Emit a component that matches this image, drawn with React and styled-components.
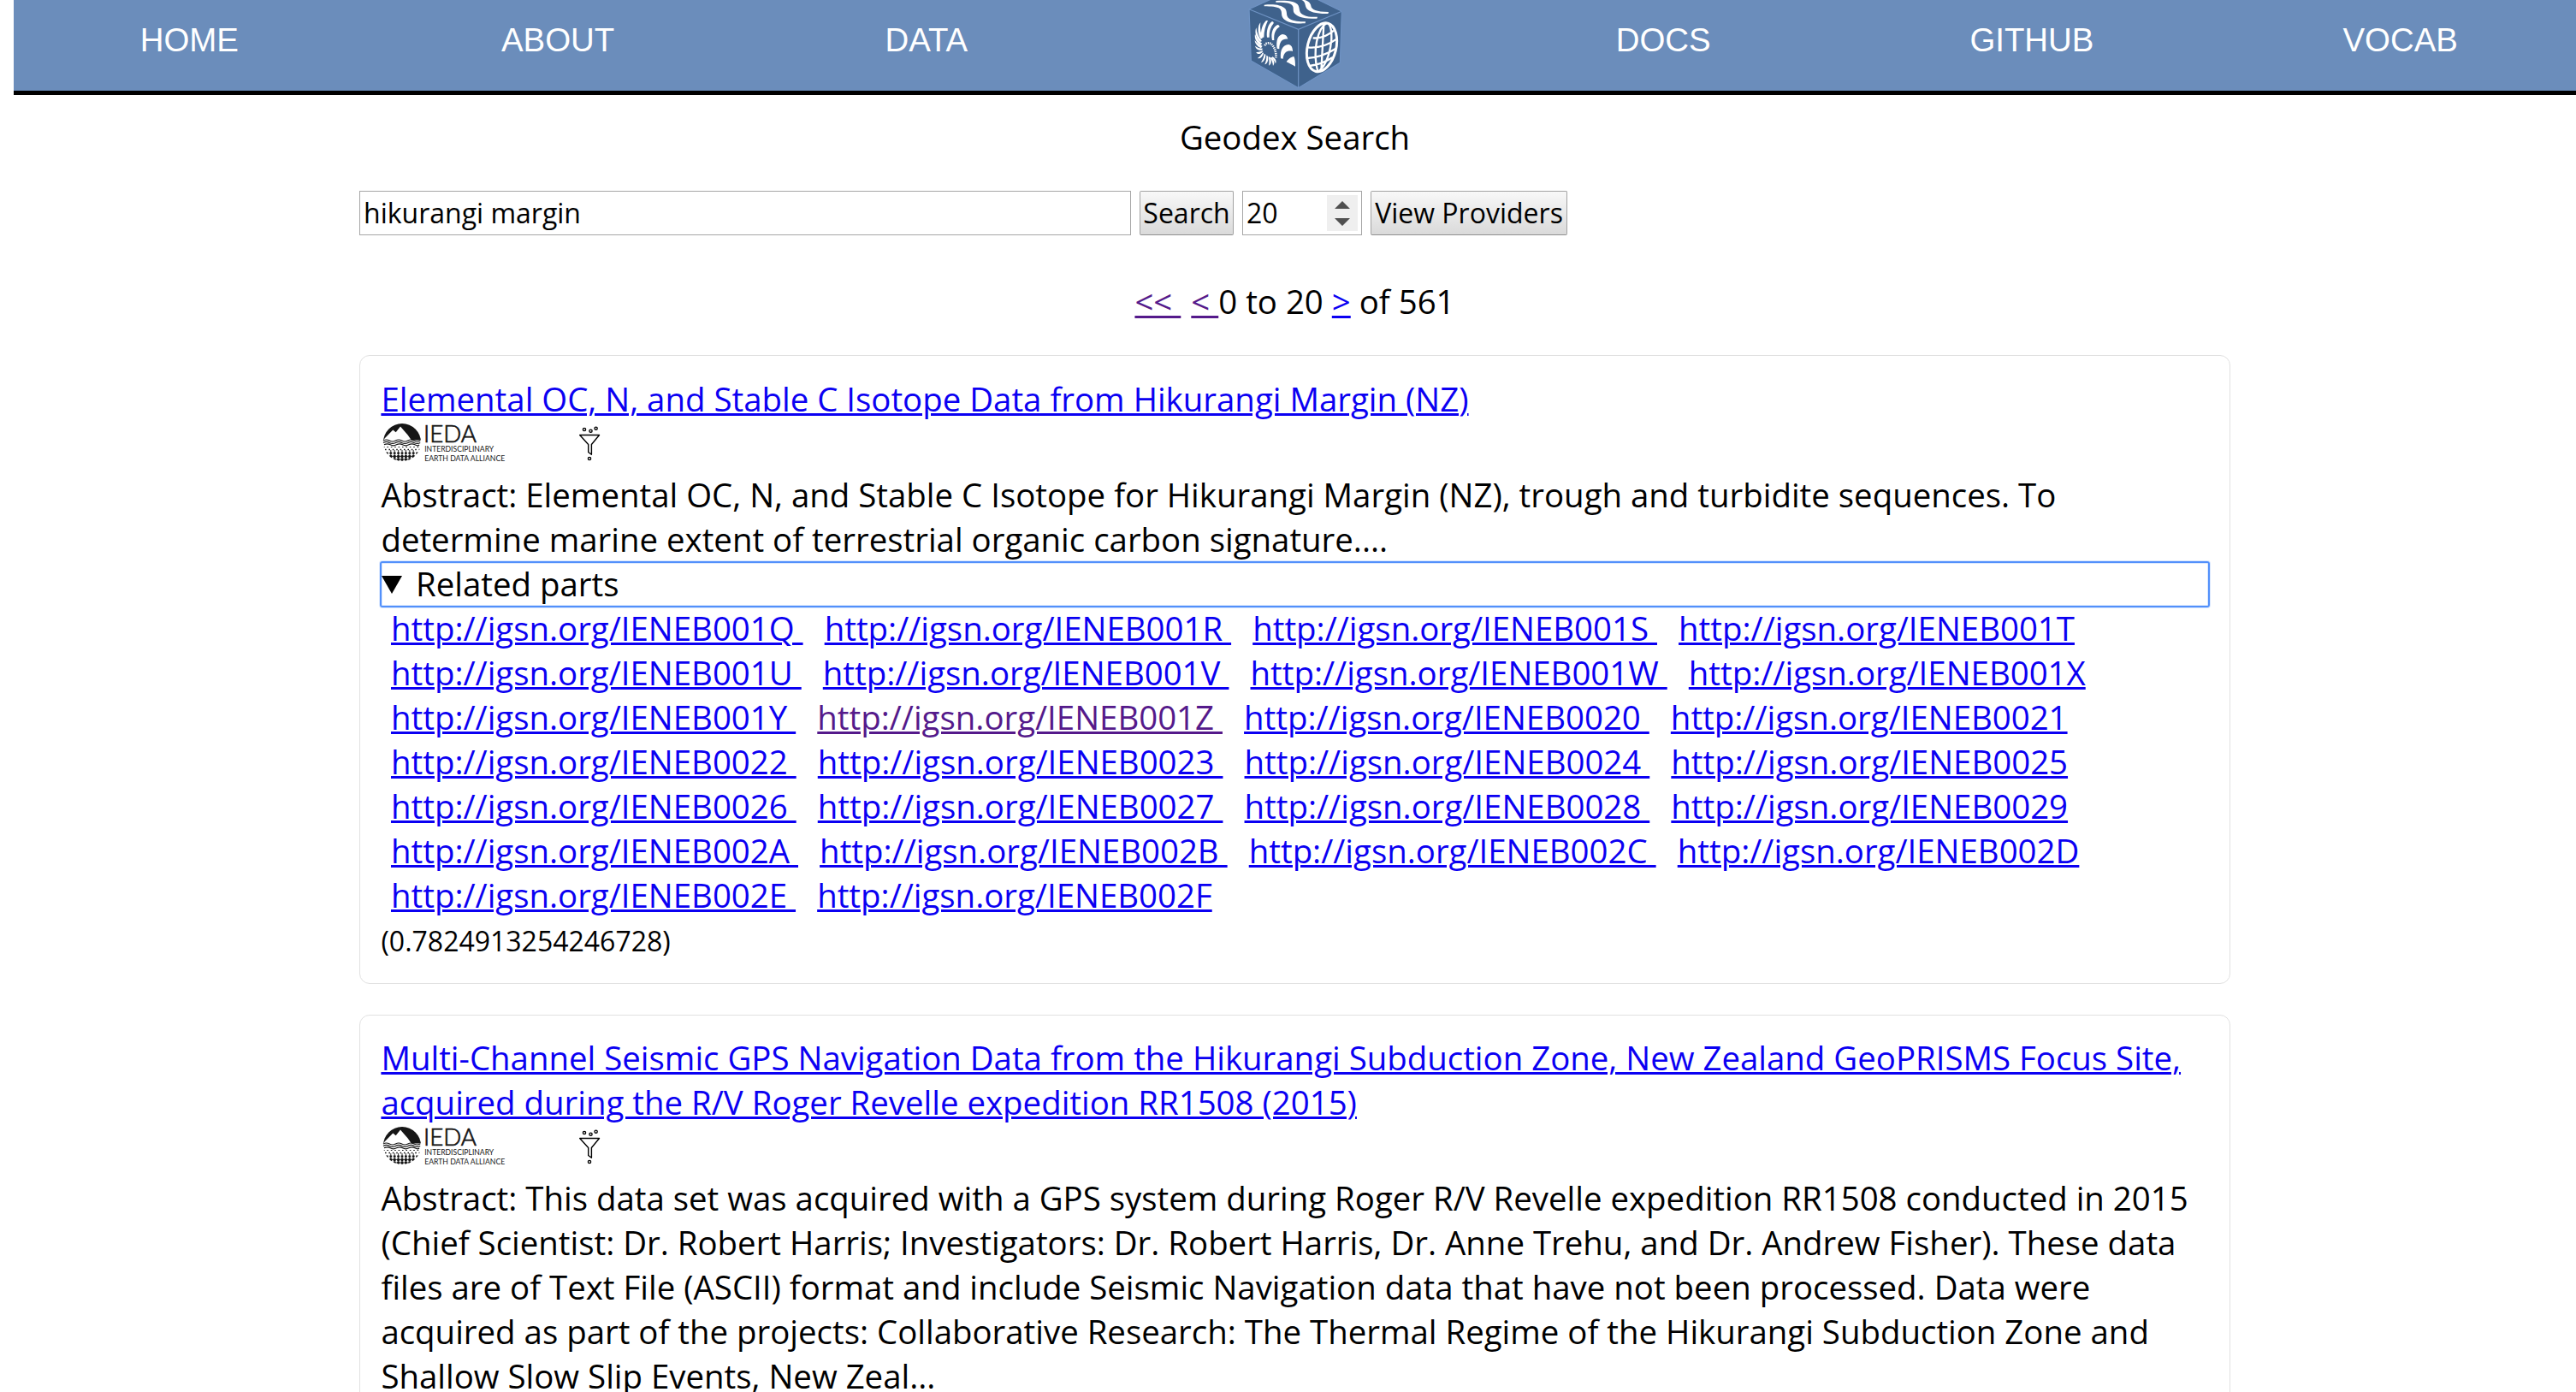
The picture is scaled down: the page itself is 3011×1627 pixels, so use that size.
import React from 'react';
import styled, { createGlobalStyle } from 'styled-components';

const GlobalStyle = createGlobalStyle`
  html, body { margin: 0; background: #fff; overflow: hidden; height: 1627px; }
  * { box-sizing: border-box; }
`;

const Page = styled.div`
  height: 1627px;
  overflow: hidden;
  padding-left: 16px;
  font-family: 'Open Sans', 'Noto Sans', sans-serif;
  font-size: 38.4px;
  line-height: 52px;
  color: #000;
`;

const Header = styled.header`
  display: grid;
  grid-template-columns: repeat(7, 1fr);
  column-gap: 20px;
  height: 111px;
  background: #6b8dbb;
  border-bottom: 5px solid #000;
`;

const NavLink = styled.a`
  display: flex;
  justify-content: center;
  padding-top: 25px;
  line-height: 44px;
  font-family: 'Liberation Sans', Arial, sans-serif;
  color: #fff;
  text-decoration: none;
`;

const LogoCell = styled.div`
  display: flex;
  justify-content: center;
  height: 106px;
  padding-left: 3px;
  overflow: hidden;
`;

const Main = styled.main`
  display: flex;
  flex-direction: column;
  width: 2187px;
  margin-left: 404px;
`;

const Heading = styled.div`
  margin-top: 23px;
  text-align: center;
`;

const SearchBar = styled.form`
  display: flex;
  gap: 10px;
  height: 52px;
  margin-top: 37px;
  font-size: 32px;
`;

const TextField = styled.input`
  width: ${(p) => p.$width};
  height: 100%;
  padding: 0 4px 1px;
  border: ${(p) => (p.$bare ? '0' : '1px solid #a6a6a6')};
  outline: 0;
  font: inherit;
  color: #000;
  background: #fff;
`;

const NumberBox = styled.div`
  display: flex;
  align-items: center;
  justify-content: space-between;
  width: 140px;
  padding-right: 4px;
  border: 1px solid #a6a6a6;
`;

const Spinner = styled.div`
  display: flex;
  width: 36px;
  height: 42px;
  background: #efefef;
`;

const Button = styled.button`
  width: ${(p) => p.$width};
  padding: 0 0 1px;
  border: 1px solid #a3a3a3;
  border-bottom-color: #8f8f8f;
  border-radius: 2px;
  background: linear-gradient(#f8f8f8, #dadada);
  font: inherit;
  line-height: 48px;
  color: #000;
  white-space: nowrap;
`;

const Link = styled.a`
  color: ${(p) => (p.$visited ? '#551a8b' : '#0b00f2')};
  text-decoration: underline;
  text-decoration-thickness: 3px;
  white-space: ${(p) => (p.$pre ? 'pre' : 'normal')};
`;

const Pager = styled.div`
  display: flex;
  justify-content: center;
  margin: 51px 0 37px;
  white-space: pre;
`;

const PagerGap = styled.span`
  width: 12px;
`;

const Card = styled.section`
  margin-bottom: 36px;
  padding: ${(p) => p.$top}px 25px 24px 24.4px;
  border: 1px solid #e1e1e1;
  border-radius: 12px;
`;

const LogoRow = styled.div`
  display: flex;
  height: 60px;
  padding-left: 0.6px;
`;

const FunnelBox = styled.div`
  margin-left: 60px;
`;

const Summary = styled.div`
  display: flex;
  align-items: center;
  height: 54px;
  margin: 0 -2px -2px -1.4px;
  padding-bottom: 2px;
  gap: 16px;
  border: 2px solid #5290fb;
  border-radius: 3px;
  box-shadow: 0 0 0 1px rgba(82, 144, 251, 0.2), inset 0 0 0 1px rgba(82, 144, 251, 0.2);
`;

const Marker = styled.svg`
  margin-top: 3px;
`;

const PartsRow = styled.div`
  display: flex;
  gap: 25.1px;
  padding-left: 11.6px;
`;

const Score = styled.div`
  height: 53px;
  padding-top: 2px;
  font-size: 32px;
`;

function CubeLogo() {
  return (
    <svg width="170" height="106" viewBox="0 0 510 318">
      <path d="M90 32 L252 -40 L415 40 L409 220 L263 308 L97 213 Z" fill="#3f628c" />
      <path d="M90 32 L263 103 L415 40 M263 103 V308 M90 32 L97 213 L263 308 L409 220 L415 40 M90 32 L170 -4 M415 40 L326 -4" fill="none" stroke="#6f93c4" strokeWidth="3.5" />
      <g fill="#fff">
        <path d="M143 17 C175 14 203 16 217 31 C226 44 217 56 232 66 C246 75 266 76 288 76 L287 82 C252 84 225 80 211 66 C199 53 209 42 198 31 C187 23 168 23 143 22 Z" />
        <path d="M184 3 C220 1 247 3 260 15 C270 27 262 42 278 51 C292 59 310 60 330 59 L328 65 C293 67 264 63 251 49 C240 37 250 26 240 17 C230 8 209 9 184 8 Z" />
        <path d="M276 -2 C298 2 305 10 307 20 C309 34 325 41 369 42 L367 48 C327 49 301 42 292 30 C285 19 289 5 274 0 Z" />
        <path d="M252 233 C243 228 231 222 221 217 C227 207 238 199 247 198 C251 205 252 218 252 233 Z" />
        <path d="M201 205 C198 178 207 157 228 156 C238 158 243 165 243 180 C226 176 212 181 209 206 Z" />
        <path d="M188 170 C184 143 190 124 207 120 C218 121 223 126 226 137 C207 135 196 146 196 172 Z" />
        <path d="M171 141 C165 115 175 93 190 87 C195 88 197 91 197 94 C183 103 176 117 178 141 Z" />
        <path d="M153 131 C150 108 157 83 171 75 C176 77 177 79 176 82 C165 96 160 111 161 131 Z" />
        <path d="M133 131 C129 109 137 84 150 72 L156 72 C148 89 142 108 142 131 Z" />
        <path d="M131 137 C119 118 119 91 130 79 C127 99 131 118 138 133 Z" />
        <path d="M129 147 C113 133 109 112 115 97 C117 116 124 131 135 144 Z" />
        <path d="M130 159 C114 149 108 132 111 119 C117 135 126 145 136 153 Z" />
        <path d="M132 169 C119 164 110 151 110 141 C119 153 127 158 137 161 Z" />
        <path d="M135 176 C124 178 113 171 111 161 C121 168 129 170 138 170 Z" />
        <path d="M137 182 C130 191 118 192 115 183 C124 184 132 180 139 177 Z" />
        <path d="M141 187 C137 201 127 208 120 204 C130 198 134 190 138 184 Z" />
        <path d="M148 191 C148 207 140 218 132 219 C139 208 142 199 143 189 Z" />
        <path d="M156 197 C159 212 154 223 145 226 C150 214 151 205 151 194 Z" />
        <path d="M164 201 C170 214 168 226 159 230 C162 218 160 208 158 198 Z" />
        <path d="M169 201 C179 211 181 222 174 231 C173 218 169 210 164 203 Z" />
        <path d="M172 199 C184 205 187 215 183 223 C180 214 175 208 169 203 Z" />
      </g>
      <path d="M146 160 C147 150 160 148 168 155 C179 164 186 184 184 203" fill="none" stroke="#fff" strokeWidth="8" strokeDasharray="4 3" />
      <g fill="none" stroke="#fff" strokeWidth="7">
        <ellipse cx="345" cy="166" rx="50" ry="87" transform="rotate(14 345 166)" strokeWidth="9" />
        <path d="M363 80 C330 98 311 180 331 251 M367 80 C394 110 374 220 332 252 M352 84 L343 250 M314 133 C340 136 365 126 387 107 M297 166 C338 170 370 156 398 136 M293 204 C335 203 367 188 397 169 M302 231 C330 228 360 216 382 202" />
      </g>
    </svg>
  );
}

function IedaLogo() {
  return (
    <svg width="162" height="56" viewBox="0 0 162 56">
      <defs>
        <clipPath id="disc"><circle cx="24" cy="25" r="22" /></clipPath>
      </defs>
      <g clipPath="url(#disc)">
        <rect x="0" y="2" width="48" height="20.5" fill="#161616" />
        <path d="M0 25 L4 20 L13.3 10.5 L16.7 13.3 L22 6.5 L30.7 16.5 L35 22.7 L35 25 Z" fill="#fff" />
        <g stroke="#161616" strokeDasharray="1.6 2.8">
          <path d="M2 30.5 H46" strokeWidth="1" />
          <path d="M4 33.5 H46" strokeWidth="1.4" />
        </g>
        <g stroke="#161616" strokeDasharray="2.8 1.6">
          <path d="M5 37.6 H46" strokeWidth="2.4" />
          <path d="M5 41.4 H46" strokeWidth="3" />
          <path d="M5 45 H46" strokeWidth="3.2" />
        </g>
        <g stroke="#161616" strokeWidth="0.9">
          <path d="M10.8 34 V47 M15.2 34 V47 M19.6 34 V47 M24 34 V47 M28.4 34 V47 M32.8 34 V47 M37.2 34 V47" />
          <path d="M8 41.4 H40 M12 45 H36" />
        </g>
      </g>
      <g fill="none" stroke="#161616" strokeWidth="1.2">
        <path d="M2 23 q3.6 -2 7.2 0 t7.2 0 t7.2 0 t7.2 0 t7.2 0 t7.2 0" />
        <path d="M2 25.4 q3.6 -2 7.2 0 t7.2 0 t7.2 0 t7.2 0 t7.2 0 t7.2 0" />
        <path d="M3 27.8 q3.6 -2 7.2 0 t7.2 0 t7.2 0 t7.2 0 t7.2 0 t5 0" />
      </g>
      <g fill="#161616" fontFamily="Lato, sans-serif">
        <text x="49" y="25.3" fontSize="26.5" fontWeight="300" stroke="#161616" strokeWidth="0.7" textLength="62" lengthAdjust="spacingAndGlyphs">IEDA</text>
        <text x="50.2" y="36.3" fontSize="8.6" textLength="81" lengthAdjust="spacingAndGlyphs">INTERDISCIPLINARY</text>
        <text x="50.2" y="47" fontSize="8.6" textLength="94" lengthAdjust="spacingAndGlyphs">EARTH DATA ALLIANCE</text>
      </g>
    </svg>
  );
}

function FunnelIcon() {
  return (
    <svg width="44" height="56" viewBox="0 0 44 56" fill="none" stroke="#000" strokeWidth="1.4">
      <circle cx="15" cy="10" r="1.6" />
      <circle cx="22.5" cy="11.7" r="1.6" />
      <circle cx="28.6" cy="8.7" r="1.6" />
      <circle cx="21" cy="44" r="1.6" />
      <path d="M9.7 16.5 H32.5 L23.4 27.5 V39.3 L19.7 36.5 V27.5 Z" strokeLinejoin="round" />
    </svg>
  );
}

function ResultLogos() {
  return (
    <LogoRow>
      <IedaLogo />
      <FunnelBox><FunnelIcon /></FunnelBox>
    </LogoRow>
  );
}

const partRows = [
  ['001Q', '001R', '001S', '001T'],
  ['001U', '001V', '001W', '001X'],
  ['001Y', '001Z', '0020', '0021'],
  ['0022', '0023', '0024', '0025'],
  ['0026', '0027', '0028', '0029'],
  ['002A', '002B', '002C', '002D'],
  ['002E', '002F'],
];

const lines = (items) => items.map((t) => <div key={t}>{t}</div>);

export default function App() {
  return (
    <Page>
      <GlobalStyle />
      <Header>
        <NavLink>HOME</NavLink>
        <NavLink>ABOUT</NavLink>
        <NavLink>DATA</NavLink>
        <LogoCell><CubeLogo /></LogoCell>
        <NavLink>DOCS</NavLink>
        <NavLink>GITHUB</NavLink>
        <NavLink>VOCAB</NavLink>
      </Header>
      <Main>
        <Heading>Geodex Search</Heading>
        <SearchBar>
          <TextField $width="902px" defaultValue="hikurangi margin" />
          <Button type="button" $width="110px">Search</Button>
          <NumberBox>
            <TextField $bare $width="96px" defaultValue="20" />
            <Spinner>
              <svg width="36" height="42" viewBox="0 0 36 42" fill="#505050">
                <path d="M9 16 L18 7 L27 16 Z M9 27 L18 36 L27 27 Z" />
              </svg>
            </Spinner>
          </NumberBox>
          <Button type="button" $width="230px">View Providers</Button>
        </SearchBar>
        <Pager>
          <Link $visited $pre>{'<< '}</Link>
          <PagerGap />
          <Link $visited $pre>{'< '}</Link>
          <span>{'0 to 20 '}</span>
          <Link $pre>{'>'}</Link>
          <span>{' of 561'}</span>
        </Pager>
        <Card $top={24}>
          <Link>Elemental OC, N, and Stable C Isotope Data from Hikurangi Margin (NZ)</Link>
          <ResultLogos />
          {lines([
            'Abstract: Elemental OC, N, and Stable C Isotope for Hikurangi Margin (NZ), trough and turbidite sequences. To',
            'determine marine extent of terrestrial organic carbon signature....',
          ])}
          <Summary>
            <Marker width="24" height="21" viewBox="0 0 24 21"><path d="M0 0 H24 L12 21 Z" /></Marker>
            Related parts
          </Summary>
          {partRows.map((row) => (
            <PartsRow key={row[0]}>
              {row.map((id, i) => (
                <Link key={id} $pre $visited={id === '001Z'}>
                  {`http://igsn.org/IENEB${id}${i === 3 || id === '002F' ? '' : ' '}`}
                </Link>
              ))}
            </PartsRow>
          ))}
          <Score>(0.7824913254246728)</Score>
        </Card>
        <Card $top={23}>
          <Link>
            Multi-Channel Seismic GPS Navigation Data from the Hikurangi Subduction Zone, New Zealand GeoPRISMS Focus Site,
            {' '}acquired during the R/V Roger Revelle expedition RR1508 (2015)
          </Link>
          <ResultLogos />
          {lines([
            'Abstract: This data set was acquired with a GPS system during Roger R/V Revelle expedition RR1508 conducted in 2015',
            '(Chief Scientist: Dr. Robert Harris; Investigators: Dr. Robert Harris, Dr. Anne Trehu, and Dr. Andrew Fisher). These data',
            'files are of Text File (ASCII) format and include Seismic Navigation data that have not been processed. Data were',
            'acquired as part of the projects: Collaborative Research: The Thermal Regime of the Hikurangi Subduction Zone and',
            'Shallow Slow Slip Events, New Zeal...',
          ])}
        </Card>
      </Main>
    </Page>
  );
}
